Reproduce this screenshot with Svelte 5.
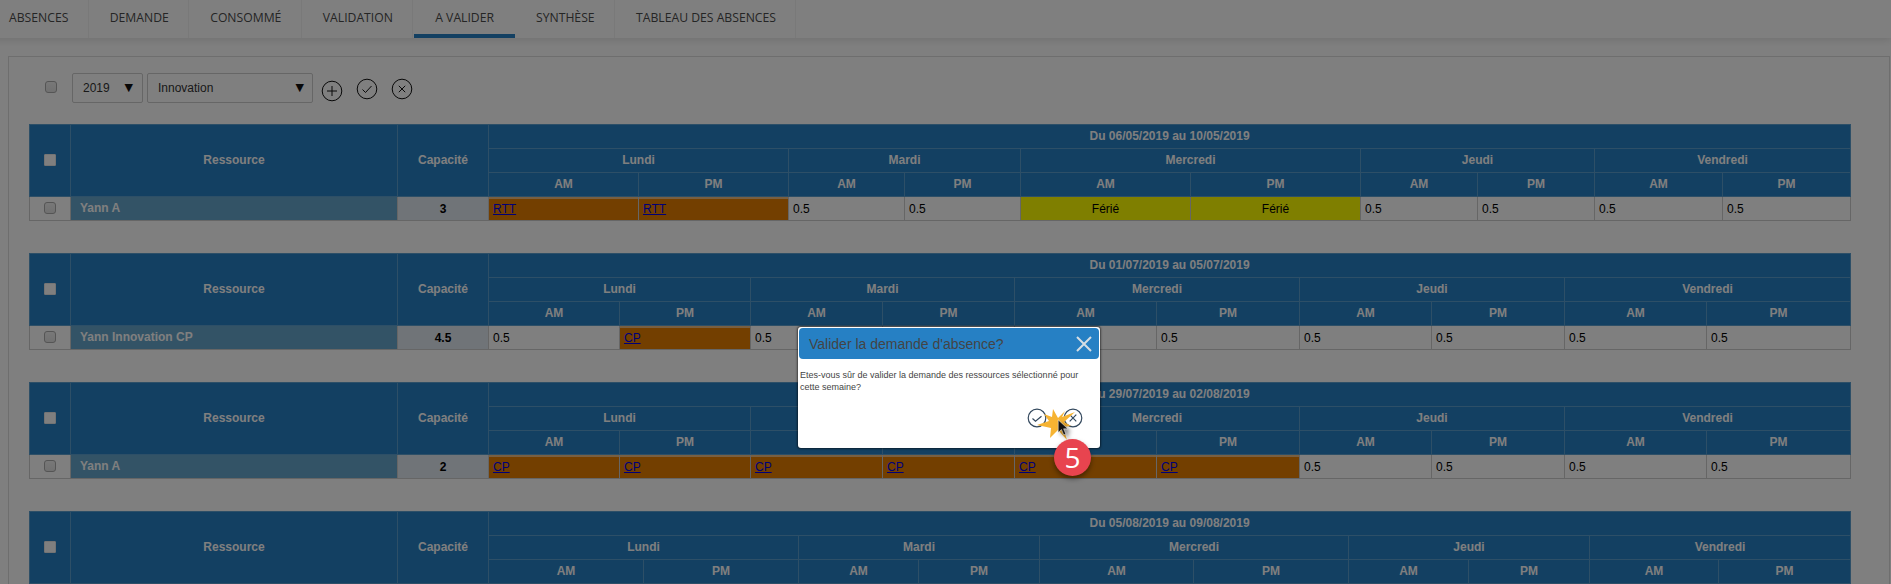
<script>
  const tabs = ['ABSENCES', 'DEMANDE', 'CONSOMMÉ', 'VALIDATION', 'A VALIDER', 'SYNTHÈSE', 'TABLEAU DES ABSENCES'];
  const days = ['Lundi', 'Mardi', 'Mercredi', 'Jeudi', 'Vendredi'];
  const half = (v) => (v === 'RTT' || v === 'CP' ? { link: v } : v === 'Férié' ? { holiday: v } : { text: v });
  const weeks = [
    {
      title: 'Du 06/05/2019 au 10/05/2019',
      edges: [488, 638, 788, 904, 1020, 1190, 1360, 1477, 1594, 1722, 1850],
      name: 'Yann A', cap: '3',
      cells: ['RTT', 'RTT', '0.5', '0.5', 'Férié', 'Férié', '0.5', '0.5', '0.5', '0.5']
    },
    {
      title: 'Du 01/07/2019 au 05/07/2019',
      edges: [488, 619, 750, 882, 1014, 1156, 1299, 1431, 1564, 1706, 1850],
      name: 'Yann Innovation CP', cap: '4.5',
      cells: ['0.5', 'CP', '0.5', '0.5', '0.5', '0.5', '0.5', '0.5', '0.5', '0.5']
    },
    {
      title: 'Du 29/07/2019 au 02/08/2019',
      edges: [488, 619, 750, 882, 1014, 1156, 1299, 1431, 1564, 1706, 1850],
      name: 'Yann A', cap: '2',
      cells: ['CP', 'CP', 'CP', 'CP', 'CP', 'CP', '0.5', '0.5', '0.5', '0.5']
    },
    {
      title: 'Du 05/08/2019 au 09/08/2019',
      edges: [488, 643, 798, 918, 1039, 1193, 1348, 1468, 1589, 1718, 1850],
      name: 'Yann A', cap: '0',
      cells: ['0.5', '0.5', '0.5', '0.5', '0.5', '0.5', '0.5', '0.5', '0.5', '0.5']
    }
  ];
</script>

<div class="page">
  <nav class="tabs">
    {#each tabs as t}
      <div class="tab" class:active={t === 'A VALIDER'}>{t}</div>
    {/each}
  </nav>

  <section class="panel">
    <div class="toolbar">
      <span class="box tool-check"></span>
      <div class="select year"><span>2019</span><i>▼</i></div>
      <div class="select team"><span>Innovation</span><i>▼</i></div>
      <svg class="ico plus" viewBox="0 0 22 22"><circle cx="11" cy="11" r="9.8" /><path d="M11 6v10M6 11h10" /></svg>
      <svg class="ico" viewBox="0 0 22 22"><circle cx="11" cy="11" r="9.8" /><path d="M6.5 11.5l3 3 6-6.5" /></svg>
      <svg class="ico" viewBox="0 0 22 22"><circle cx="11" cy="11" r="9.8" /><path d="M7.8 7.8l6.4 6.4M14.2 7.8l-6.4 6.4" /></svg>
    </div>

    {#each weeks as w}
      <table>
        <colgroup>
          <col style="width:41px" />
          <col style="width:327px" />
          <col style="width:91px" />
          {#each w.edges.slice(1) as e, i}
            <col style="width:{e - w.edges[i]}px" />
          {/each}
        </colgroup>
        <thead>
          <tr>
            <th rowspan="3" class="th-check"><span class="box head-check"></span></th>
            <th rowspan="3">Ressource</th>
            <th rowspan="3">Capacité</th>
            <th colspan="10">{w.title}</th>
          </tr>
          <tr>
            {#each days as d}<th colspan="2">{d}</th>{/each}
          </tr>
          <tr>
            {#each days as d}<th>AM</th><th>PM</th>{/each}
          </tr>
        </thead>
        <tbody>
          <tr>
            <td class="c-check"><span class="box row-check"></span></td>
            <td class="c-name">{w.name}</td>
            <td class="c-cap">{w.cap}</td>
            {#each w.cells.map(half) as c}
              {#if c.link}
                <td class="absent"><a href="#a">{c.link}</a></td>
              {:else if c.holiday}
                <td class="holiday">{c.holiday}</td>
              {:else}
                <td>{c.text}</td>
              {/if}
            {/each}
          </tr>
        </tbody>
      </table>
    {/each}
  </section>

  <div class="veil"></div>

  <div class="dialog">
    <header>
      <h2>Valider la demande d'absence?</h2>
      <svg class="close" viewBox="0 0 16 16"><path d="M1 1l14 14M15 1L1 15" /></svg>
    </header>
    <p>Etes-vous sûr de valider la demande des ressources sélectionné pour cette semaine?</p>
    <div class="actions">
      <svg class="act" viewBox="0 0 20 20"><circle cx="10" cy="10" r="8.8" /><path d="M5.5 10.5l3 2.8 6-5" /></svg>
      <svg class="act" viewBox="0 0 20 20"><circle cx="10" cy="10" r="8.8" /><path d="M6.7 6.7l6.6 6.6M13.3 6.7l-6.6 6.6" /></svg>
    </div>
  </div>

  <svg class="burst" viewBox="0 0 44 36">
    <polygon points="18,3 23,12 30,5 27,11 40,6 29,16 36,20 28,21 32,34 23,24 15,32 16,22 2,19 14,15 9,8 17,11" />
  </svg>
  <svg class="cursor" viewBox="0 0 16 22">
    <path d="M1.5 1v15.5l4-3.6 2.8 6.6 2.6-1.1-2.8-6.4h5.2z" />
  </svg>
  <div class="badge">5</div>
</div>

<style>
  :global(body) {
    margin: 0;
    background: #fff;
  }
  .page {
    position: relative;
    height: 584px;
    overflow: hidden;
    font-family: "Liberation Sans", Arial, sans-serif;
    font-size: 12px;
    color: #000;
  }
  .tabs {
    display: flex;
    height: 38px;
    margin-left: -12px;
    box-shadow: 0 2px 8px rgba(0, 0, 0, .12);
    font-family: "Open Sans", sans-serif;
    font-size: 12.2px;
    color: #4a4a4a;
  }
  .tab {
    box-sizing: border-box;
    padding: 9px 19.4px 0 21px;
    border-right: 1px solid #f2f2f2;
    white-space: nowrap;
    line-height: 17px;
  }
  .tab.active {
    border-right: 0;
    margin-left: 1px;
    padding-right: 21px;
    border-bottom: 4px solid #2680c4;
  }
  .panel {
    margin: 18px 1px 0 8px;
    padding: 16px 20px 0;
    border: 1px solid #ddd;
    border-bottom: 0;
  }
  .toolbar {
    display: flex;
    align-items: flex-start;
    height: 51px;
  }
  .box {
    display: inline-block;
    box-sizing: border-box;
    width: 12px;
    height: 12px;
    border: 1px solid #aaa;
    border-radius: 3px;
    background: linear-gradient(#f0f0f0, #e2e2e2);
    vertical-align: middle;
  }
  .head-check {
    background: #fff;
    border-color: #e8e8e8;
    border-radius: 1px;
  }
  .tool-check {
    margin: 8px 15px 0 16px;
  }
  .select {
    display: flex;
    justify-content: space-between;
    box-sizing: border-box;
    height: 30px;
    border: 1px solid #ccc;
    border-radius: 2px;
    padding: 0 8px 0 10px;
    line-height: 28px;
    color: #333;
  }
  .select i {
    font-style: normal;
    color: #111;
    font-family: "DejaVu Sans", sans-serif;
    font-size: 11px;
  }
  .year {
    width: 71px;
    margin-right: 4px;
    padding-right: 9px;
  }
  .team {
    width: 166px;
    margin-right: 8px;
  }
  .ico {
    width: 22px;
    height: 22px;
    margin: 5px 13px 0 0;
    fill: none;
    stroke: #111;
    stroke-width: 1;
  }
  .ico.plus {
    margin-top: 7px;
  }
  table {
    table-layout: fixed;
    border-collapse: collapse;
    width: 1821px;
    margin-bottom: 32px;
  }
  th, td {
    height: 24px;
    box-sizing: border-box;
    padding: 0 4px;
    border: 1px solid #ccc;
    overflow: hidden;
    white-space: nowrap;
  }
  th {
    background: #2680c4;
    border-color: #5b9fcf;
    color: #fff;
    font-weight: bold;
    text-align: center;
    padding-bottom: 1px;
  }
  .th-check {
    padding: 0 0 3px;
  }
  td {
    background: #fff;
  }
  .c-check {
    text-align: center;
    padding: 0 0 3px;
  }
  .c-name {
    background: #66a6cc;
    color: #fff;
    font-weight: bold;
    padding: 0 4px 2px 9px;
  }
  .c-cap {
    background: #e0e8f0;
    font-weight: bold;
    text-align: center;
  }
  .absent {
    background: linear-gradient(#fff 1px, #e67e00 1px);
  }
  .holiday {
    background: #ff0;
    text-align: center;
  }
  a {
    color: #0000ee;
    text-decoration: underline;
  }
  .veil {
    position: absolute;
    inset: 0;
    background: rgba(0, 0, 0, .5);
  }
  .dialog {
    position: absolute;
    left: 798px;
    top: 327px;
    width: 302px;
    height: 121px;
    box-sizing: border-box;
    padding: 1px;
    background: #fff;
    border-radius: 3px;
    box-shadow: 0 0 2px 1px rgba(0, 0, 0, .5);
  }
  .dialog header {
    display: flex;
    align-items: center;
    justify-content: space-between;
    height: 31px;
    padding: 0 7px 0 10px;
    background: #2680c4;
    border-radius: 4px;
  }
  h2 {
    margin: 0;
    font-size: 14px;
    font-weight: normal;
    color: #444;
  }
  .close {
    width: 16px;
    height: 16px;
    fill: none;
    stroke: #d5dde3;
    stroke-width: 2;
  }
  .dialog p {
    margin: 10px 0 0;
    width: 292px;
    padding-left: 1px;
    font-size: 9px;
    line-height: 12px;
    color: #444;
  }
  .actions {
    position: absolute;
    left: 229px;
    top: 81px;
    display: flex;
    gap: 16px;
  }
  .act {
    width: 20px;
    height: 20px;
    fill: #fff;
    stroke: #34495e;
    stroke-width: 1.2;
  }
  .burst {
    position: absolute;
    left: 1035px;
    top: 406px;
    width: 44px;
    height: 36px;
    fill: #f6b332;
  }
  .cursor {
    position: absolute;
    left: 1057px;
    top: 419px;
    width: 13px;
    height: 18px;
    fill: #111;
    stroke: #fff;
    stroke-width: .6;
    filter: drop-shadow(3px 3px 2px rgba(0, 0, 0, .5));
  }
  .badge {
    position: absolute;
    left: 1054px;
    top: 439px;
    width: 37px;
    height: 37px;
    border-radius: 50%;
    background: #e8444f;
    color: #fff;
    font-family: "Open Sans", sans-serif;
    font-size: 28px;
    line-height: 37px;
    text-align: center;
    box-shadow: 0 3px 5px rgba(0, 0, 0, .4);
  }
</style>
